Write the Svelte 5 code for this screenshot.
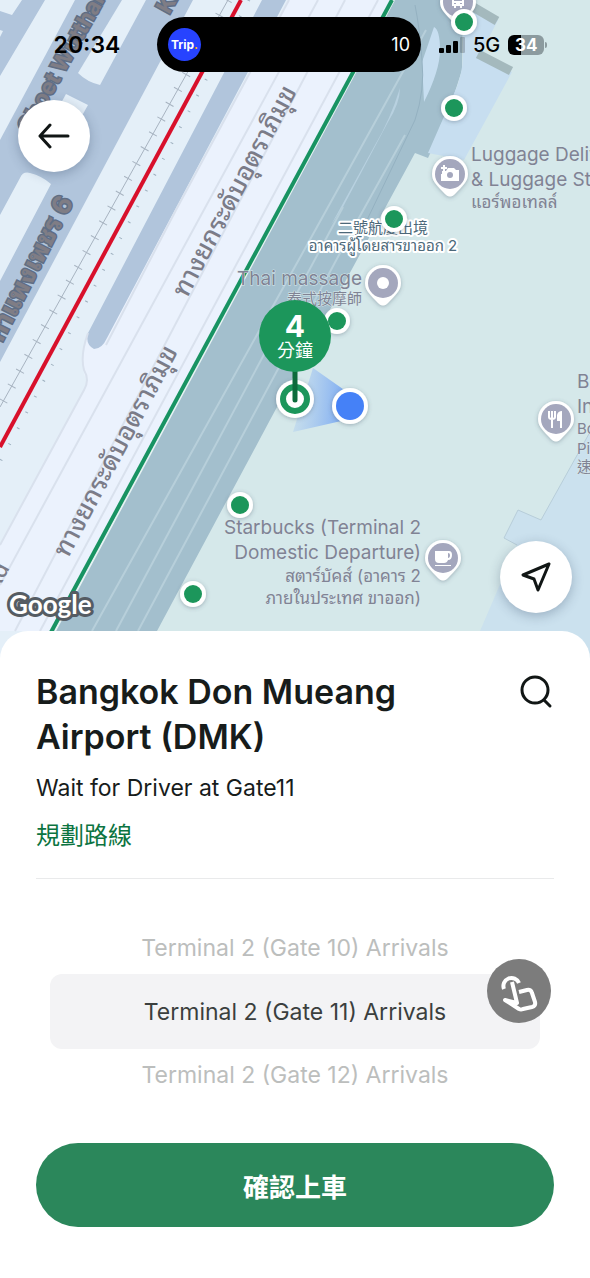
<script>
	const road = 'ทางยกระดับอุตราภิมุข';

	const stops = [
		{ x: 464, y: 22 },
		{ x: 454, y: 108 },
		{ x: 394, y: 219 },
		{ x: 337, y: 321 },
		{ x: 240, y: 505 },
		{ x: 193, y: 594 }
	];

	const pins = [
		{ x: 450, y: 174, icon: 'camera' },
		{ x: 383, y: 283, icon: 'dot' },
		{ x: 556, y: 419, icon: 'food' },
		{ x: 443, y: 558, icon: 'cup' },
		{ x: 458, y: 2, icon: 'bus' }
	];

	const labels = [
		{ x: 471, y: 161, text: 'Luggage Delivery', big: true },
		{ x: 471, y: 186, text: '& Luggage Storage', big: true },
		{ x: 471, y: 208, text: 'แอร์พอเทลล์', thai: true },
		{ x: 362, y: 285, text: 'Thai massage', big: true, end: true },
		{ x: 362, y: 304, text: '泰式按摩師', end: true },
		{ x: 421, y: 534, text: 'Starbucks (Terminal 2', big: true, end: true },
		{ x: 421, y: 559, text: 'Domestic Departure)', big: true, end: true },
		{ x: 421, y: 582, text: 'สตาร์บัคส์ (อาคาร 2', thai: true, end: true },
		{ x: 421, y: 604, text: 'ภายในประเทศ ขาออก)', thai: true, end: true },
		{ x: 577, y: 388, text: 'Boon', big: true },
		{ x: 577, y: 413, text: 'International', big: true },
		{ x: 577, y: 434, text: 'Boon' },
		{ x: 577, y: 454, text: 'Pier' },
		{ x: 577, y: 472, text: '速食' }
	];

	const gates = [
		'Terminal 2 (Gate 10) Arrivals',
		'Terminal 2 (Gate 11) Arrivals',
		'Terminal 2 (Gate 12) Arrivals'
	];
	let selected = $state(1);
</script>

<div class="screen">
	<section class="map">
		<svg class="scene" viewBox="0 0 590 660" preserveAspectRatio="xMidYMin slice">
			<defs>
				<filter id="shadow" x="-50%" y="-50%" width="200%" height="200%">
					<feDropShadow dx="0" dy="1" stdDeviation="2" flood-color="#456" flood-opacity="0.4" />
				</filter>
				<linearGradient id="beam" x1="1" y1="0.6" x2="0" y2="0.5">
					<stop offset="0" stop-color="#5f97f5" stop-opacity="0.85" />
					<stop offset="1" stop-color="#9cc0f2" stop-opacity="0.25" />
				</linearGradient>
			</defs>
			<rect width="590" height="660" fill="#e4eff8" />

			<!-- surface streets -->
			<g fill="#b1c5dc">
				<path d="M22 0H45L0 76V11L12 15Z" />
				<path d="M75 0H193L0 362V140Z" />
			</g>
			<g fill="#e4eff8">
				<path d="M0 30L3 31L0 37Z" />
				<path d="M122 0H146L100 85Q87 82 78 73Z" />
				<path d="M66 94L88 105L60 155L38 145Z" />
				<path d="M0 215L20 178Q23 171 30 173Q42 176 51 184L0 281Z" />
			</g>

			<!-- elevated tollway -->
			<path d="M289 0H392L52 631H0V545L86 388Q88 382 84 374Q80 355 88 333L176 210Z" fill="#ebf2fd" />
			<path d="M262 0H286L107 338Q102 349 94 349Q85 344 88 333Z" fill="#b1c5dc" />
			<g class="lane">
				<path d="M289 0L176 210L106 345M88 333Q80 355 84 370Q90 380 84 390L0 545" />
				<path d="M318 0L0 585" />
				<path d="M345 0L15 631" />
				<path d="M378 0L40 631" />
			</g>
			<path d="M228 0L0 407" stroke="#a7b3c0" stroke-width="1" />
			<path d="M228 0L0 407" stroke="#a7b3c0" stroke-width="9" stroke-dasharray="1 16" />
			<path d="M249 0L0 462" stroke="#9eb0bf" stroke-width="3" stroke-dasharray="1 17" />
			<path d="M241 0L0 447" stroke="#d8102b" stroke-width="4" />

			<!-- terminal frontage and building -->
			<path d="M392 0H590V660H36Z" fill="#a3bfcd" />
			<path d="M463 0H590V660H141L157 631L270 420L415 153L428 158L446 120L462 70Z" fill="#d5e8ea" />
			<path d="M463 0H470L498 20L480 55L512 72L464 160L428 153L453 96Q463 75 463 55Z" fill="#c7def0" />
			<path d="M468 4L497 21M478 54L511 71" stroke="#a4b9bd" stroke-width="9" />
			<path d="M590 432L541 520L518 510L504 538L517 545L480 631L470 660H590Z" fill="#cbe1ee" />
			<path d="M590 432L541 520L518 510L504 538L517 545" fill="none" stroke="#b7cdd9" />
			<path d="M434 27Q440 30 440 50Q440 70 424 102L422 62Q428 45 434 27Z" fill="#c7def0" />
			<path d="M400 88Q400 103 388 122L343 207L331 225L375 145Q390 120 400 88Z" fill="#b8d1e0" />
			<path d="M415 5Q420 30 422 60Q425 90 415 120L367 220" fill="none" stroke="#94b1c1" />
			<g class="kerb">
				<path d="M426 30L312 236L92 631" />
				<path d="M343 207L116 631" />
				<path d="M405 135L355 225L138 631" />
			</g>
			<path d="M394 0L55 631" stroke="#e6f3f3" stroke-width="2" />
			<path d="M392 0L36 660" stroke="#189362" stroke-width="4" />

			<g class="street">
				<text transform="translate(30 135) rotate(-61)">Choet Wutthakat</text>
				<text transform="translate(169 15) rotate(-61)">Kamphaeng</text>
				<text class="wide" transform="translate(2 343) rotate(-63)">กำแพงเพชร 6</text>
			</g>
			<g class="tollway">
				<text class="wide" transform="translate(187 299) rotate(-62)">{road}</text>
				<text class="wide" transform="translate(68 559) rotate(-62)">{road}</text>
				<text transform="translate(-3 592) rotate(-62)">Rd</text>
			</g>

			{#each labels as label}
				<text class="place" class:big={label.big} class:thai={label.thai} class:end={label.end} x={label.x} y={label.y}>{label.text}</text>
			{/each}
			<g class="terminal">
				<text x="383" y="233">二號航廈出境</text>
				<text x="383" y="251">อาคารผู้โดยสารขาออก 2</text>
			</g>

			{#each pins as pin}
				<g transform="translate({pin.x} {pin.y})">
					<path d="M-18 0A18 18 0 1 1 18 0C18 8 12 12 5 20Q0 25-5 20C-12 12-18 8-18 0Z" fill="#fff" filter="url(#shadow)" />
					<circle r="15" fill="#a4a7bd" />
					{#if pin.icon === 'camera'}
						<path d="M-8-3H-4L-2-6H4L6-4H9V7H-9V0H-8ZM-9-7H-7V-9H-5V-7H-3V-5H-5V-3H-7V-5H-9Z" fill="#fff" />
						<circle cy="1" r="3" fill="#a4a7bd" />
					{:else if pin.icon === 'dot'}
						<circle r="6" fill="#fff" />
					{:else if pin.icon === 'food'}
						<path d="M-7-8V-2Q-7 0-4 0V9M-1-8V-2Q-1 0-4 0V-8" fill="none" stroke="#fff" stroke-width="2" />
						<path d="M6-8V9H4V2H1V-4Q2-8 6-8Z" fill="#fff" />
					{:else if pin.icon === 'cup'}
						<path d="M-8-7H6Q9-7 9-3Q9 2 5 2Q4 5 1 5H-4Q-8 5-8 1ZM5-5V0Q7 0 7-3Q7-5 5-5ZM-8 7H8V8H-8Z" fill="#fff" fill-rule="evenodd" />
					{:else}
						<path d="M-6-7H6V4H4V6H2V4H-2V6H-4V4H-6ZM-4-5V-1H4V-5ZM-4 1V2H-2V1ZM2 1V2H4V1Z" fill="#fff" fill-rule="evenodd" />
					{/if}
				</g>
			{/each}

			{#each stops as stop}
				<circle cx={stop.x} cy={stop.y} r="13" fill="#fff" filter="url(#shadow)" />
				<circle cx={stop.x} cy={stop.y} r="9" fill="#1c965b" />
			{/each}

			<path d="M313 368L350 394V419L293 432Z" fill="url(#beam)" />
			<circle cx="350" cy="406" r="18" fill="#fff" filter="url(#shadow)" />
			<circle cx="350" cy="406" r="14" fill="#4581f7" />

			<circle cx="295" cy="399" r="19" fill="#fff" filter="url(#shadow)" />
			<circle cx="295" cy="399" r="12" fill="#fff" stroke="#1c965b" stroke-width="6" />
			<path d="M295 370V400" stroke="#0d6b3c" stroke-width="5" stroke-linecap="round" />
			<circle cx="295" cy="336" r="36" fill="#1c965b" />
			<text class="eta" x="295" y="337">4</text>
			<text class="unit" x="295" y="357">分鐘</text>

			<text class="google" x="9" y="614">Google</text>
		</svg>

		<div class="status">
			<span class="clock">20:34</span>
			<div class="island">
				<span class="trip">Trip<i>.</i></span>
				<span>10</span>
			</div>
			<div class="signals">
				<svg width="26" height="18" viewBox="0 0 26 18">
					<rect y="12" width="5" height="5" rx="1" />
					<rect x="7" y="9" width="5" height="8" rx="1" />
					<rect x="14" y="5" width="5" height="12" rx="1" />
					<rect x="21" y="1" width="5" height="16" rx="1" opacity="0.2" />
				</svg>
				<span>5G</span>
				<span class="battery">34</span>
			</div>
		</div>

		<button class="round back" aria-label="Back">
			<svg width="32" height="26" viewBox="0 0 32 26"><path d="M30 13H2M12 2L2 13L12 24" /></svg>
		</button>
		<button class="round locate" aria-label="My location">
			<svg width="32" height="32" viewBox="0 0 32 32"><path d="M29 3L3 14L14 18L18 29Z" /></svg>
		</button>
	</section>

	<main class="sheet">
		<header>
			<h1>Bangkok Don Mueang Airport (DMK)</h1>
			<button class="search" aria-label="Search">
				<svg width="34" height="34" viewBox="0 0 34 34"><circle cx="15" cy="15" r="13" /><path d="M24 25L30 31" /></svg>
			</button>
		</header>
		<p>Wait for Driver at Gate11</p>
		<a href="#route">規劃路線</a>

		<div class="picker">
			{#each gates as gate, i}
				<button class:selected={i === selected} onclick={() => (selected = i)}>{gate}</button>
			{/each}
			<button class="touch" aria-label="Assistive touch">
				<svg width="44" height="44" viewBox="0 0 44 44">
					<path d="M7 20A8 8 0 1 1 22 14" />
					<path d="M15 13L20 34L8 31L22 40Q24 41 26 40L35 38Q39 37 38 33L35 24Q34 20 30 21L22 23" />
				</svg>
			</button>
		</div>

		<button class="confirm">確認上車</button>
	</main>
</div>

<style>
	:global(body) {
		margin: 0;
		background: #fff;
	}

	.screen {
		font-family: Inter, 'Noto Sans Thai Looped', 'Noto Looped Thai', Loma, 'Noto Sans Thai', 'Noto Sans CJK TC', sans-serif;
		color: #171c1b;
		overflow: hidden;
	}

	button {
		border: 0;
		padding: 0;
		font: inherit;
		color: inherit;
		cursor: pointer;
	}

	.map {
		position: relative;
		height: 660px;
	}
	.scene {
		position: absolute;
		inset: 0;
		width: 100%;
		height: 100%;
	}
	.lane {
		fill: none;
		stroke: #d9e1ed;
		stroke-width: 2;
	}
	.kerb {
		fill: none;
		stroke: #b7cfda;
		stroke-width: 2;
	}
	.street {
		font-size: 22px;
		font-weight: 700;
		fill: #7f7d85;
		stroke: #5f6e85;
		stroke-width: 3px;
		paint-order: stroke;
	}
	.tollway {
		font-size: 22px;
		font-weight: 500;
		fill: #7b7c88;
	}
	.wide {
		font-size: 26px;
	}
	.place {
		font-size: 15px;
		fill: #808394;
		stroke: #d9e9ec;
		stroke-width: 1px;
		paint-order: stroke;
	}
	.thai {
		font-size: 17px;
	}
	.big {
		font-size: 19px;
	}
	.end {
		text-anchor: end;
	}
	.terminal {
		font-size: 15px;
		text-anchor: middle;
		fill: #4c6879;
		stroke: #fff;
		stroke-width: 4px;
		stroke-linejoin: round;
		paint-order: stroke;
	}
	.eta,
	.unit {
		text-anchor: middle;
		fill: #fff;
		font-size: 30px;
		font-weight: 700;
	}
	.unit {
		font-size: 18px;
		font-weight: 400;
	}
	.google {
		font-family: Lato, sans-serif;
		font-size: 26px;
		font-weight: 700;
		fill: #fff;
		stroke: #555c63;
		stroke-width: 6px;
		stroke-linejoin: round;
		paint-order: stroke;
	}

	.status {
		position: relative;
		display: grid;
		grid-template-columns: 1fr 264px 1fr;
		align-items: center;
		padding: 17px 12px 28px 0;
		color: #000;
	}
	.clock {
		padding-left: 17px;
		text-align: center;
		font-size: 23px;
		font-weight: 600;
	}
	.island {
		display: flex;
		align-items: center;
		justify-content: space-between;
		box-sizing: border-box;
		height: 55px;
		padding: 0 11px;
		border-radius: 28px;
		background: #000;
		color: #fff;
		font-size: 18px;
	}
	.trip {
		width: 33px;
		line-height: 33px;
		border-radius: 50%;
		background: #2743ff;
		font-size: 12px;
		font-weight: 700;
		text-align: center;
	}
	.trip i {
		color: #ffb000;
		font-style: normal;
	}
	.signals {
		display: flex;
		align-items: center;
		gap: 8px;
		padding-left: 18px;
		font-size: 20px;
		font-weight: 500;
	}
	.battery {
		position: relative;
		width: 36px;
		line-height: 20px;
		border-radius: 6px;
		background: linear-gradient(90deg, #000 36%, #8c9b9f 36%);
		color: #fff;
		font-size: 17px;
		font-weight: 700;
		text-align: center;
	}
	.battery::after {
		content: '';
		position: absolute;
		top: 7px;
		right: -3px;
		width: 2px;
		height: 6px;
		border-radius: 0 2px 2px 0;
		background: #8c9b9f;
	}

	.round {
		position: absolute;
		display: grid;
		place-items: center;
		width: 72px;
		height: 72px;
		border-radius: 50%;
		background: #fff;
		box-shadow: 0 3px 12px rgba(40, 60, 90, 0.3);
	}
	.back {
		top: 100px;
		left: 18px;
	}
	.locate {
		right: 18px;
		bottom: 47px;
	}
	.round path,
	.search svg,
	.touch path {
		fill: none;
		stroke: #111615;
		stroke-width: 3;
		stroke-linecap: round;
		stroke-linejoin: round;
	}

	.sheet {
		position: relative;
		display: flex;
		flex-direction: column;
		margin-top: -29px;
		padding: 38px 36px 51px;
		border-radius: 28px 28px 0 0;
		background: #fff;
	}
	header {
		display: flex;
		justify-content: space-between;
		align-items: flex-start;
	}
	h1 {
		flex: 1;
		max-width: 400px;
		margin: 0;
		font-size: 34px;
		font-weight: 600;
		line-height: 45px;
	}
	.search {
		height: 45px;
		background: none;
	}
	.search svg {
		display: block;
	}
	p {
		margin: 13px 0 16px;
		font-size: 23px;
		line-height: 32px;
	}
	a {
		padding-bottom: 26px;
		border-bottom: 1px solid #e9eaeb;
		color: #0c7441;
		font-size: 24px;
		line-height: 32px;
		text-decoration: none;
	}

	.picker {
		position: relative;
		display: flex;
		flex-direction: column;
		margin: 43px 14px 42px;
	}
	.picker button {
		height: 52px;
		border-radius: 12px;
		background: none;
		color: #bcbebd;
		font-size: 23px;
	}
	.picker .selected {
		height: 75px;
		background: #f3f3f5;
		color: #3b3f3e;
	}
	.picker .touch {
		position: absolute;
		top: 37px;
		right: -11px;
		display: grid;
		place-items: center;
		width: 64px;
		height: 64px;
		border-radius: 50%;
		background: #7c7c7c;
	}
	.touch path {
		stroke: #fff;
		stroke-width: 4;
		stroke-linecap: butt;
	}

	.confirm {
		height: 84px;
		border-radius: 42px;
		background: #2b875b;
		color: #fff;
		font-size: 26px;
		font-weight: 700;
	}
</style>
